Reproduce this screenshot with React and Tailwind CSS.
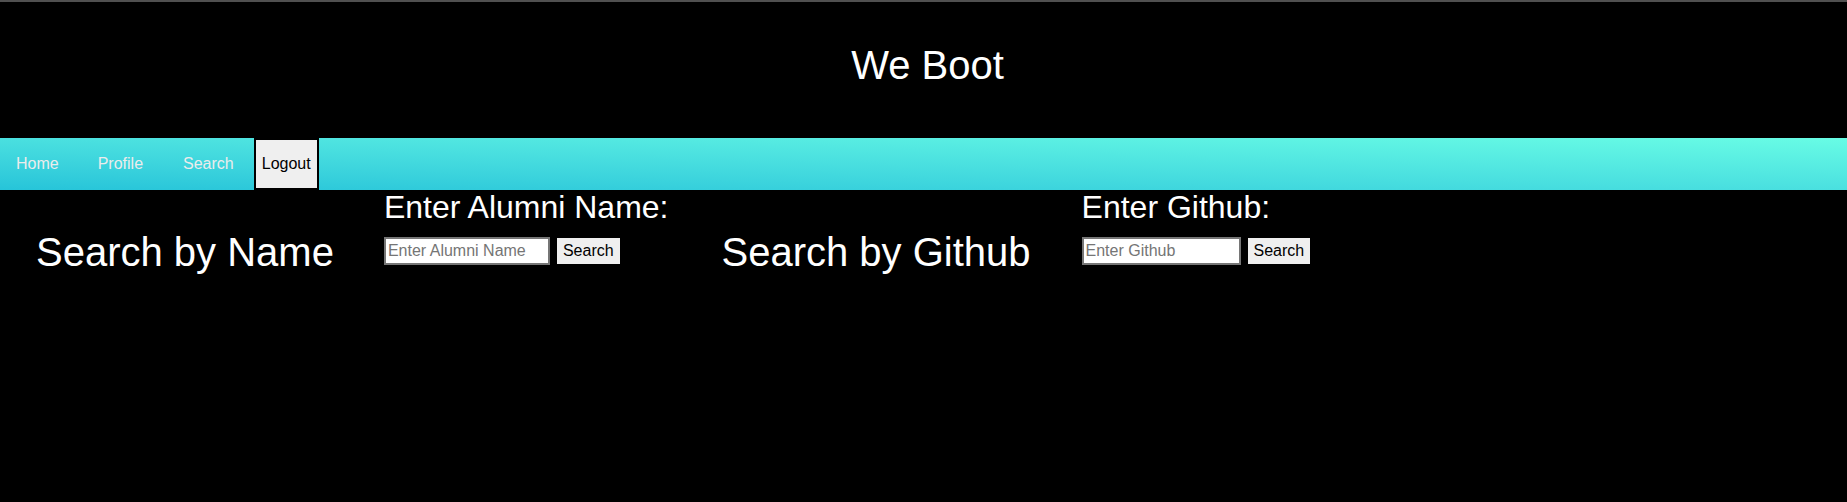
export default function App() {
    const navLinks = [
        { label: 'Home', gap: 'ml-0' },
        { label: 'Profile', gap: 'ml-[7px]' },
        { label: 'Search', gap: 'ml-[8px]' },
    ];

    return (
        <div className="min-h-screen bg-black font-['Liberation_Sans',Arial,sans-serif] text-white">
            <div className="h-[2px] bg-[#505050]"></div>

            <header className="h-[136px] pt-[41px] pl-[8px] text-center">
                <h1 className="text-[40px] leading-[45px] font-normal">We Boot</h1>
            </header>

            <nav className="flex h-[52px] items-stretch bg-linear-to-tr from-[#26c4d9] to-[#68fce5]">
                {navLinks.map((link) => (
                    <a
                        key={link.label}
                        href="#"
                        className={`flex items-center px-4 text-[16px] leading-[18px] text-[#ececec] ${link.gap}`}
                    >
                        {link.label}
                    </a>
                ))}
                <button className="ml-[4px] flex items-center border-2 border-black bg-[#efefef] px-[6px] text-[16px] leading-[18px] text-black">
                    Logout
                </button>
            </nav>

            <div className="flex items-start pl-[36px]">
                <h1 className="mt-[40px] text-[40px] leading-[45px] font-normal">Search by Name</h1>
                <div className="ml-[50px]">
                    <h2 className="text-[32px] leading-[35px] font-normal">Enter Alumni Name:</h2>
                    <div className="mt-[12px] flex items-center gap-[7px]">
                        <input
                            type="text"
                            placeholder="Enter Alumni Name"
                            className="h-[28px] w-[166px] border-2 border-[#767676] bg-white px-[2px] text-[16px] text-black placeholder:text-[#757575] outline-none"
                        />
                        <button className="h-[26px] bg-[#efefef] px-[6px] text-[16px] leading-[18px] text-black">
                            Search
                        </button>
                    </div>
                </div>

                <h1 className="ml-[53px] mt-[40px] text-[40px] leading-[45px] font-normal">Search by Github</h1>
                <div className="ml-[51px]">
                    <h2 className="text-[32px] leading-[35px] font-normal">Enter Github:</h2>
                    <div className="mt-[12px] flex items-center gap-[7px]">
                        <input
                            type="text"
                            placeholder="Enter Github"
                            className="h-[28px] w-[159px] border-2 border-[#767676] bg-white px-[2px] text-[16px] text-black placeholder:text-[#757575] outline-none"
                        />
                        <button className="h-[26px] bg-[#efefef] px-[6px] text-[16px] leading-[18px] text-black">
                            Search
                        </button>
                    </div>
                </div>
            </div>
        </div>
    );
}
